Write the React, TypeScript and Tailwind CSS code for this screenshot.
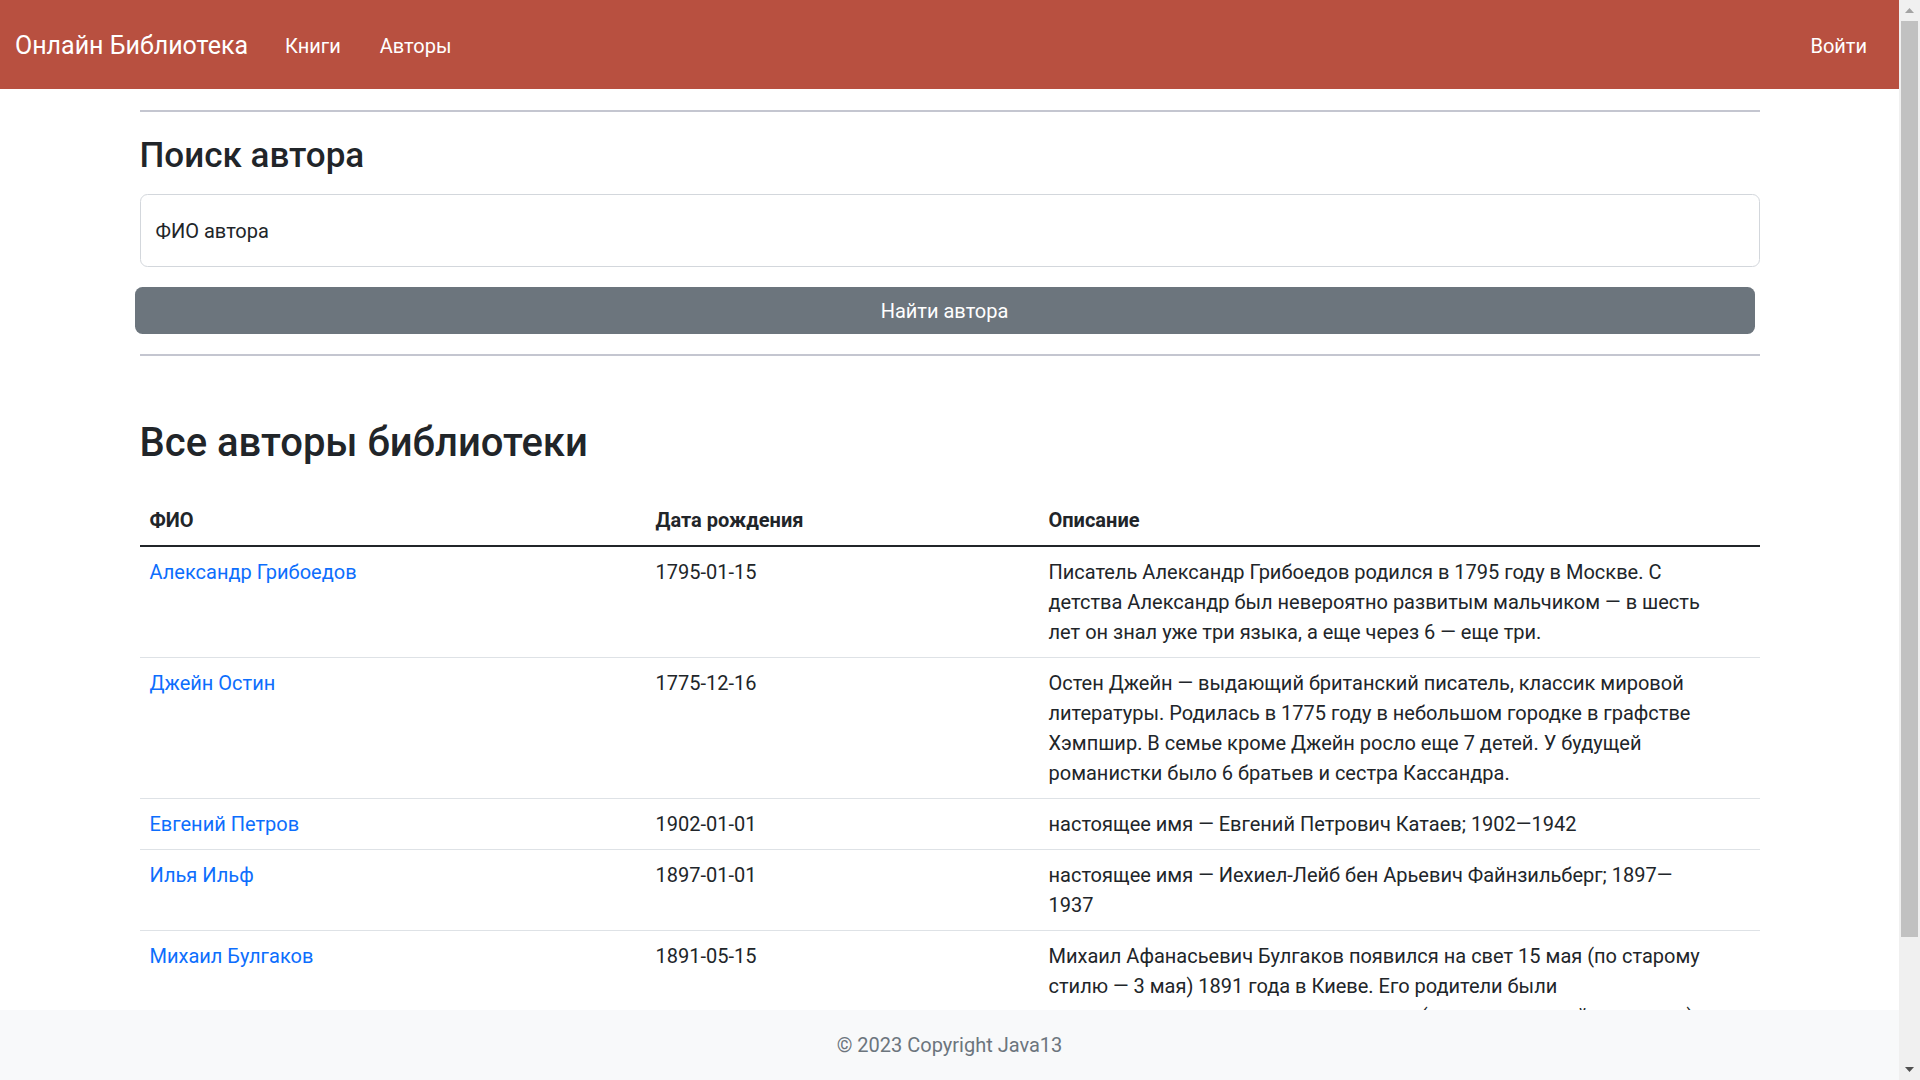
import React from "react";

type Author = {
  name: string;
  born: string;
  about: string[];
};

const authors: Author[] = [
  {
    name: "Александр Грибоедов",
    born: "1795-01-15",
    about: [
      "Писатель Александр Грибоедов родился в 1795 году в Москве. С",
      "детства Александр был невероятно развитым мальчиком — в шесть",
      "лет он знал уже три языка, а еще через 6 — еще три.",
    ],
  },
  {
    name: "Джейн Остин",
    born: "1775-12-16",
    about: [
      "Остен Джейн — выдающий британский писатель, классик мировой",
      "литературы. Родилась в 1775 году в небольшом городке в графстве",
      "Хэмпшир. В семье кроме Джейн росло еще 7 детей. У будущей",
      "романистки было 6 братьев и сестра Кассандра.",
    ],
  },
  {
    name: "Евгений Петров",
    born: "1902-01-01",
    about: ["настоящее имя — Евгений Петрович Катаев; 1902—1942"],
  },
  {
    name: "Илья Ильф",
    born: "1897-01-01",
    about: [
      "настоящее имя — Иехиел-Лейб бен Арьевич Файнзильберг; 1897—",
      "1937",
    ],
  },
  {
    name: "Михаил Булгаков",
    born: "1891-05-15",
    about: [
      "Михаил Афанасьевич Булгаков появился на свет 15 мая (по старому",
      "стилю — 3 мая) 1891 года в Киеве. Его родители были",
      "представителями интеллигенции: отец (доцент духовной академии) и",
      "мать, бывшая учительница.",
    ],
  },
];

function Navbar() {
  return (
    <nav className="flex items-center h-[89px] bg-[#b85040] pl-[15px] pr-[32px] pt-[3px] text-white">
      <a className="text-[25px] leading-[38px]">Онлайн Библиотека</a>
      <a className="ml-[37px] text-[20px] leading-[30px]">Книги</a>
      <a className="ml-[39px] text-[20px] leading-[30px]">Авторы</a>
      <a className="ml-auto text-[20px] leading-[30px]">Войти</a>
    </nav>
  );
}

function Scrollbar() {
  return (
    <div className="flex flex-col w-[21px] h-full bg-[#f0f0f0]">
      <div className="flex items-center justify-center h-[21px]">
        <svg width="9" height="5" viewBox="0 0 9 5">
          <polygon points="0,5 4.5,0 9,5" fill="#a3a3a3" />
        </svg>
      </div>
      <div className="mx-[2px] h-[916px] bg-[#c1c1c1]" />
      <div className="flex-1" />
      <div className="flex items-center justify-center h-[21px]">
        <svg width="9" height="5" viewBox="0 0 9 5">
          <polygon points="0,0 9,0 4.5,5" fill="#505050" />
        </svg>
      </div>
    </div>
  );
}

function AuthorsTable() {
  return (
    <table className="mt-[28px] w-full table-fixed border-collapse text-left">
      <colgroup>
        <col className="w-[506px]" />
        <col className="w-[393px]" />
        <col />
      </colgroup>
      <thead>
        <tr className="border-b-2 border-[#212529]">
          <th className="px-[10px] py-[10px] font-bold">ФИО</th>
          <th className="px-[10px] py-[10px] font-bold">Дата рождения</th>
          <th className="px-[10px] py-[10px] font-bold">Описание</th>
        </tr>
      </thead>
      <tbody>
        {authors.map((a) => (
          <tr key={a.name} className="border-b border-[#dee2e6] align-top">
            <td className="px-[10px] py-[10px]">
              <a className="text-[#0d6efd]">{a.name}</a>
            </td>
            <td className="px-[10px] py-[10px]">{a.born}</td>
            <td className="px-[10px] py-[10px]">
              {a.about.map((line, i) => (
                <div key={i}>{line}</div>
              ))}
            </td>
          </tr>
        ))}
      </tbody>
    </table>
  );
}

export default function App() {
  return (
    <div className="flex h-screen w-full overflow-hidden bg-white font-[Roboto,'Liberation_Sans',sans-serif] text-[20px] leading-[30px] text-[#212529]">
      <div className="relative flex-1 overflow-hidden">
        <Navbar />
        <main className="mx-auto w-[1620px]">
          <hr className="mt-[21px] border-0 border-t-2 border-[#c4c6d0]" />
          <h3 className="mt-[23px] text-[35px] leading-[42px] font-medium">Поиск автора</h3>
          <div className="mt-[17px] flex items-center h-[73px] rounded-[7.5px] border border-[#d3d7dc] px-[15px]">
            <span>ФИО автора</span>
          </div>
          <button className="mt-[20px] -ml-[5px] block w-[1620px] h-[47px] rounded-[7.5px] bg-[#6c757d] text-white">
            Найти автора
          </button>
          <hr className="mt-[20px] border-0 border-t-2 border-[#c4c6d0]" />
          <h2 className="mt-[63px] text-[40px] leading-[48px] font-medium">Все авторы библиотеки</h2>
          <AuthorsTable />
        </main>
        <footer className="absolute bottom-0 inset-x-0 flex items-center justify-center h-[70px] bg-[#f8f9fa] text-[#6c757d]">
          © 2023 Copyright Java13
        </footer>
      </div>
      <Scrollbar />
    </div>
  );
}
